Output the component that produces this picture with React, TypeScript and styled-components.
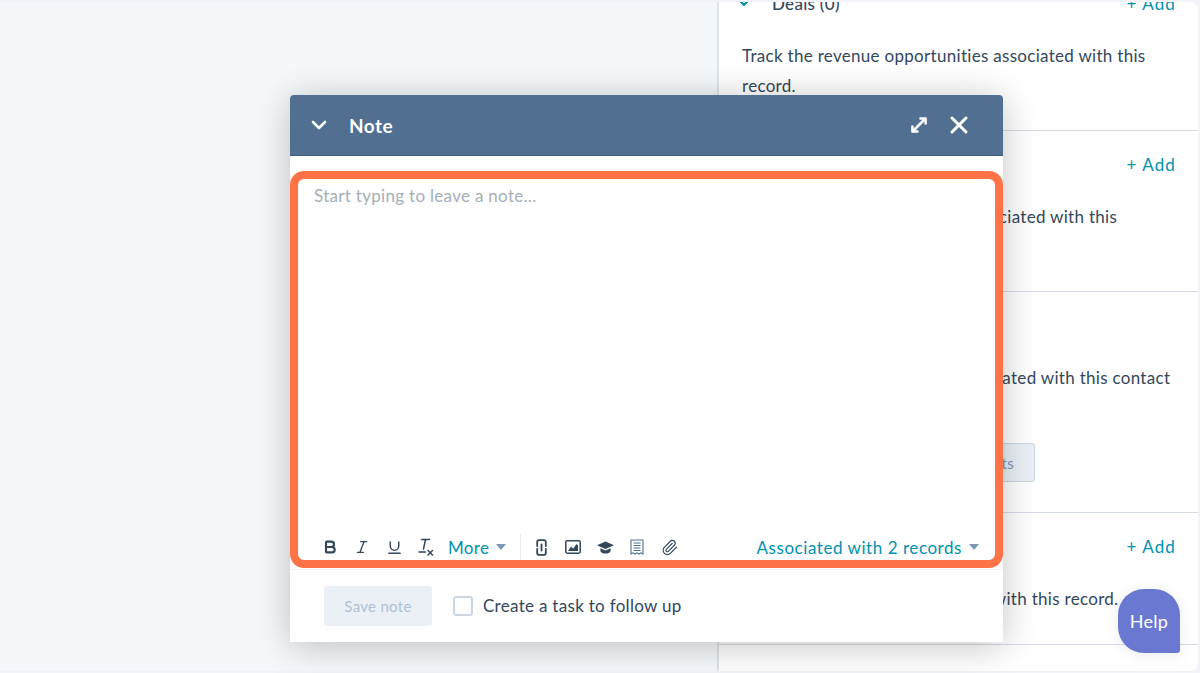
import React from "react";
import styled, { createGlobalStyle } from "styled-components";
import { Bold, ChevronDown, Italic, Paperclip, Underline, X } from "lucide-react";

const GlobalStyle = createGlobalStyle`
  html, body {
    margin: 0;
    padding: 0;
    background: #f1f3f8;
  }
  * {
    box-sizing: border-box;
  }
`;

const Page = styled.div`
  position: relative;
  width: 1200px;
  height: 673px;
  padding: 2px 2px 2px 0;
  overflow: hidden;
  background: #f1f3f8;
  font-family: Lato, "Open Sans", sans-serif;
  font-size: 17px;
  letter-spacing: 0.3px;
  color: #33475b;
`;

const Frame = styled.div`
  display: flex;
  height: 100%;
  overflow: hidden;
  border-radius: 0 8px 8px 0;
  background: #f5f8fa;
`;

const Main = styled.div`
  flex: 0 0 717px;
`;

const Sidebar = styled.aside`
  flex: 1;
  overflow: hidden;
  background: #fff;
  border-left: 2px solid #dfe3eb;
`;

const SidebarList = styled.div`
  margin-top: -32px;
`;

const Section = styled.section`
  padding: 21px 22px 30px 23px;
  border-bottom: 1px solid #d5dbe5;
`;

const SectionHead = styled.div`
  display: flex;
  align-items: center;
  height: 24px;
  margin-bottom: 26px;
`;

const Caret = styled.span`
  display: flex;
  width: 36px;
  margin-left: -6px;
  color: #0091ae;
`;

const SectionTitle = styled.span`
  font-weight: 500;
`;

const AddLink = styled.span`
  margin-left: auto;
  letter-spacing: 1.1px;
  color: #0091ae;
`;

const Description = styled.p`
  margin: 0;
  line-height: 29.5px;
`;

const GhostButton = styled.div`
  display: flex;
  align-items: center;
  justify-content: flex-end;
  width: 293px;
  height: 39px;
  margin-top: 21px;
  padding-right: 20px;
  font-size: 15px;
  color: #7c98b6;
  background: #eaf0f6;
  border: 1px solid #cbd6e2;
  border-radius: 3px;
`;

const Modal = styled.div`
  position: absolute;
  top: 95px;
  left: 290px;
  width: 713px;
  height: 547px;
  background: #fff;
  border-radius: 4px 4px 0 0;
  box-shadow: 0 4px 36px rgba(0, 0, 0, 0.24);
`;

const ModalHeader = styled.header`
  display: flex;
  align-items: center;
  height: 61px;
  padding: 0 30px 0 17px;
  color: #fff;
  background: #516f90;
  border-radius: 4px 4px 0 0;
  border-bottom: 1px solid #3f5f82;
`;

const ModalTitle = styled.h2`
  flex: 1;
  margin: 0 0 0 18px;
  font-size: 19px;
  font-weight: 700;
  letter-spacing: 0.45px;
`;

const HeaderActions = styled.div`
  display: flex;
  align-items: center;
  gap: 17px;
`;

const Highlight = styled.div`
  display: flex;
  flex-direction: column;
  height: 397px;
  margin-top: 15px;
  background: #fff;
  border: 8px solid #ff7346;
  border-radius: 14px;
`;

const Placeholder = styled.div`
  flex: 1;
  padding: 3px 16px;
  line-height: 28px;
  color: #a5aeb8;
`;

const Toolbar = styled.div`
  display: flex;
  align-items: center;
  height: 26px;
  padding: 0 16px;
`;

const ToolIcon = styled.span`
  display: flex;
  flex: 0 0 32px;
  align-items: center;
  justify-content: center;
  color: #33475b;
`;

const DropLink = styled.span`
  display: flex;
  align-items: center;
  gap: 7px;
  color: #0091ae;
`;

const MoreLink = styled(DropLink)`
  margin-left: 6px;
`;

const AssociatedLink = styled(DropLink)`
  margin-left: auto;
  letter-spacing: 0.55px;
`;

const DownCaret = styled.i`
  width: 0;
  height: 0;
  border-left: 5.5px solid transparent;
  border-right: 5.5px solid transparent;
  border-top: 6px solid #7c98b6;
`;

const ToolDivider = styled.span`
  width: 1px;
  height: 26px;
  margin: 0 4px 0 14px;
  background: #e6ebf1;
`;

const ModalFooter = styled.footer`
  display: flex;
  align-items: center;
  height: 72px;
  padding: 0 34px;
  margin-top: 1px;
  border-top: 1px solid #eef1f5;
`;

const SaveButton = styled.div`
  display: flex;
  align-items: center;
  justify-content: center;
  width: 108px;
  height: 40px;
  font-size: 15px;
  color: #b0c1d4;
  background: #eaf0f6;
  border-radius: 3px;
`;

const CheckBox = styled.span`
  width: 20px;
  height: 20px;
  margin: 0 10px 0 21px;
  background: #fff;
  border: 2px solid #cbd6e2;
  border-radius: 3px;
`;

const HelpButton = styled.div`
  position: absolute;
  top: 589px;
  left: 1118px;
  display: flex;
  align-items: center;
  justify-content: center;
  width: 62px;
  height: 64px;
  font-size: 18px;
  color: #fff;
  background: #6a78d1;
  border-radius: 26px 26px 3px 26px;
  box-shadow: 0 2px 14px rgba(80, 90, 120, 0.12);
`;

function ExpandIcon() {
  return (
    <svg width="18" height="18" viewBox="0 0 18 18" fill="none" stroke="#fff" strokeWidth="2.5" strokeLinecap="round" strokeLinejoin="round">
      <path d="M3 15 15 3" />
      <path d="M10.5 2.4h5.1v5.1" />
      <path d="M2.4 10.5v5.1h5.1" />
    </svg>
  );
}

function ClearFormatIcon() {
  return (
    <svg width="16" height="18" viewBox="0 0 16 18" fill="none" stroke="#33475b" strokeWidth="1.5" strokeLinecap="round">
      <path d="M3.5 1.5h8" />
      <path d="M7.5 1.5 5.5 11" />
      <path d="M1 14h6.5" />
      <path d="m10 12.5 4.5 4.5" />
      <path d="m14.5 12.5-4.5 4.5" />
    </svg>
  );
}

function LinkIcon() {
  return (
    <svg width="11" height="17" viewBox="0 0 11 17" fill="none" stroke="#33475b" strokeWidth="1.8" strokeLinecap="round">
      <path d="M1.2 7V2.9A1.7 1.7 0 0 1 2.9 1.2h5.2a1.7 1.7 0 0 1 1.7 1.7V7" />
      <path d="M1.2 10v4.1a1.7 1.7 0 0 0 1.7 1.7h5.2a1.7 1.7 0 0 0 1.7-1.7V10" />
      <path d="M5.5 5.5v6" />
    </svg>
  );
}

function ImageIcon() {
  return (
    <svg width="16" height="14" viewBox="0 0 16 14">
      <rect x="0.8" y="0.8" width="14.4" height="12.4" rx="1.4" fill="none" stroke="#33475b" strokeWidth="1.5" />
      <path d="M3 11 6 6.5l2.2 2.2L11.5 4 13 5.5V11z" fill="#33475b" />
    </svg>
  );
}

function CapIcon() {
  return (
    <svg width="17" height="13" viewBox="0 0 17 13" fill="#33475b">
      <path d="M8.5 0.5 0 4.3l8.5 3.8L17 4.3z" />
      <path d="M3.4 7.3v2.4c0 1.6 2.4 2.9 5.1 2.9s5.1-1.3 5.1-2.9V7.3L8.5 9.6z" />
    </svg>
  );
}

function ReceiptIcon() {
  return (
    <svg width="14" height="17" viewBox="0 0 14 17" fill="none" stroke="#516f90" strokeWidth="1.1">
      <path d="M1 1h12v14l-2-1.2-2 1.2-2-1.2-2 1.2-2-1.2-2 1.2z" />
      <path d="M3.5 4h7M3.5 6.5h7M3.5 9h7M3.5 11.5h7" />
    </svg>
  );
}

export default function App() {
  return (
    <Page>
      <GlobalStyle />
      <Frame>
        <Main />
        <Sidebar>
          <SidebarList>
            <Section>
              <SectionHead>
                <Caret>
                  <ChevronDown size={16} strokeWidth={3} />
                </Caret>
                <SectionTitle>Deals (0)</SectionTitle>
                <AddLink>+ Add</AddLink>
              </SectionHead>
              <Description>
                Track the revenue opportunities associated with this record.
              </Description>
            </Section>
            <Section>
              <SectionHead>
                <AddLink>+ Add</AddLink>
              </SectionHead>
              <Description>
                Track the customer requests associated with this support record.
              </Description>
            </Section>
            <Section>
              <SectionHead />
              <Description>
                Track the subscription tiers associated with this contact record.
              </Description>
              <GhostButton>Start collecting payments</GhostButton>
            </Section>
            <Section>
              <SectionHead>
                <AddLink>+ Add</AddLink>
              </SectionHead>
              <Description>Track the documents associated with this record.</Description>
            </Section>
            <Section>
              <SectionHead>
                <AddLink>+ Add</AddLink>
              </SectionHead>
            </Section>
          </SidebarList>
        </Sidebar>
      </Frame>

      <Modal>
        <ModalHeader>
          <ChevronDown size={24} strokeWidth={2.6} />
          <ModalTitle>Note</ModalTitle>
          <HeaderActions>
            <ExpandIcon />
            <X size={28} strokeWidth={2.6} />
          </HeaderActions>
        </ModalHeader>
        <Highlight>
          <Placeholder>Start typing to leave a note...</Placeholder>
          <Toolbar>
            <ToolIcon>
              <Bold size={16} strokeWidth={3.2} />
            </ToolIcon>
            <ToolIcon>
              <Italic size={16} strokeWidth={2} />
            </ToolIcon>
            <ToolIcon>
              <Underline size={17} strokeWidth={2} />
            </ToolIcon>
            <ToolIcon>
              <ClearFormatIcon />
            </ToolIcon>
            <MoreLink>
              More <DownCaret />
            </MoreLink>
            <ToolDivider />
            <ToolIcon>
              <LinkIcon />
            </ToolIcon>
            <ToolIcon>
              <ImageIcon />
            </ToolIcon>
            <ToolIcon>
              <CapIcon />
            </ToolIcon>
            <ToolIcon>
              <ReceiptIcon />
            </ToolIcon>
            <ToolIcon>
              <Paperclip size={17} strokeWidth={1.6} />
            </ToolIcon>
            <AssociatedLink>
              Associated with 2 records <DownCaret />
            </AssociatedLink>
          </Toolbar>
        </Highlight>
        <ModalFooter>
          <SaveButton>Save note</SaveButton>
          <CheckBox />
          <span>Create a task to follow up</span>
        </ModalFooter>
      </Modal>

      <HelpButton>Help</HelpButton>
    </Page>
  );
}
